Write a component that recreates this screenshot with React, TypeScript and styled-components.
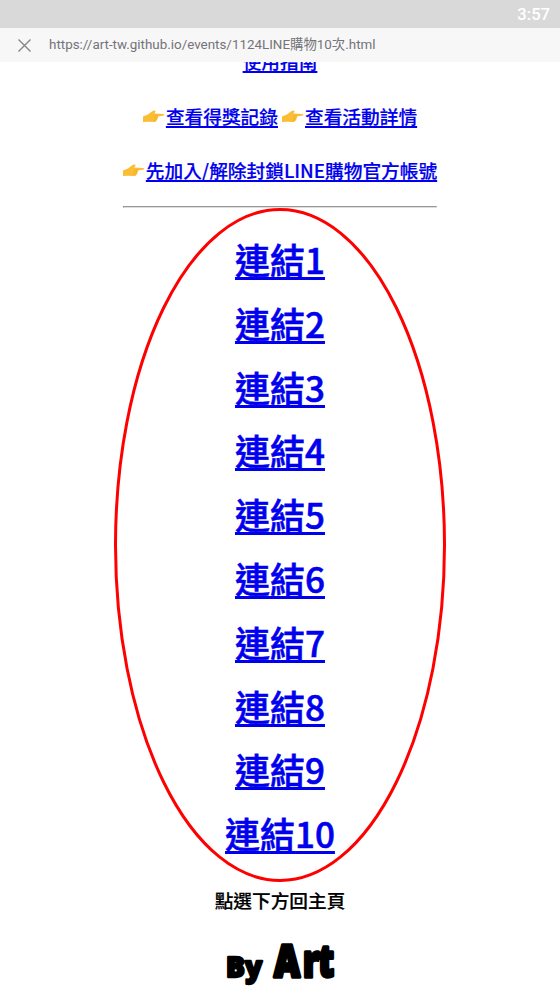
import React from "react";
import styled, { createGlobalStyle } from "styled-components";

const GlobalStyle = createGlobalStyle`
  html, body { margin: 0; background: #fff; overflow: hidden; }
  * { box-sizing: border-box; }
`;

const Screen = styled.div`
  position: relative;
  display: flex;
  flex-direction: column;
  width: 560px;
  height: 996px;
  overflow: hidden;
  background: #fff;
  font-family: "Noto Sans CJK TC", sans-serif;
`;

const StatusBar = styled.header`
  flex: none;
  height: 28px;
  padding-right: 10px;
  background: #d9d9d9;
  color: #fff;
  font: 500 16.6px/29px Roboto, sans-serif;
  text-align: right;
`;

const AddressBar = styled.div`
  flex: none;
  display: flex;
  align-items: center;
  height: 34px;
  padding-left: 18px;
  gap: 18px;
  background: #f7f7f7;
  color: #737478;
`;

const CloseIcon = styled.svg`
  width: 13px;
  height: 13px;
  stroke: #858585;
  stroke-width: 1.4;
`;

const Address = styled.span`
  font: 400 13.4px/34px Roboto, "Noto Sans CJK TC", sans-serif;
  white-space: nowrap;
`;

const Page = styled.main`
  flex: 1;
  min-height: 0;
  display: flex;
  flex-direction: column;
  align-items: center;
  overflow: hidden;
`;

const Row = styled.div<{ $h: number }>`
  flex: none;
  display: flex;
  align-items: center;
  justify-content: center;
  height: ${(p) => p.$h}px;
  white-space: nowrap;
`;

const GuideRow = styled(Row)`
  margin-top: -15px;
`;

const Link = styled.a`
  color: #0000ee;
  font-size: 18.7px;
  font-weight: 500;
  line-height: 28px;
  -webkit-text-stroke: 0.2px #0000ee;
  text-decoration: underline;
  text-decoration-thickness: 1.5px;
  text-decoration-skip-ink: none;
  text-underline-offset: 2px;
`;

const Hand = styled.svg`
  width: 22px;
  height: 14px;
  margin-right: 1px;
  margin-left: 4px;
  &:first-child { margin-left: 0; }
`;

const Divider = styled.hr`
  flex: none;
  width: 314px;
  height: 2px;
  margin: 22px 0 0;
  border: 1px solid;
  border-color: #969696 #dedede #dedede #969696;
`;

const LinkList = styled.nav`
  flex: none;
  display: grid;
  grid-auto-rows: 63.8px;
  justify-items: center;
  margin-top: 19px;
`;

const BigLink = styled(Link)`
  font-size: 35px;
  line-height: 64px;
  -webkit-text-stroke-width: 0.6px;
  text-decoration-thickness: 3px;
  text-underline-offset: 2.5px;
`;

const Caption = styled.p`
  margin: 21px 0 0;
  color: #000;
  font-size: 18.67px;
  font-weight: 500;
  line-height: 28px;
  -webkit-text-stroke: 0.2px #000;
`;

const Logo = styled.svg`
  flex: none;
  width: 130px;
  height: 60px;
  margin-top: 21px;
  fill: #000;
  stroke: #000;
  stroke-linejoin: round;
  font-family: "Noto Sans", sans-serif;
  font-weight: 900;
`;

const Ring = styled.svg`
  position: absolute;
  left: 113px;
  top: 206px;
  width: 334px;
  height: 678px;
  fill: none;
  stroke: #f00;
  stroke-width: 3;
  pointer-events: none;
`;

const PointingHand = () => (
  <Hand viewBox="0 0 22 14">
    <path
      d="M0 7.4 5 5.5 8.2 3Q10 1.6 12 1.6L12.6 2.8 11.2 4.6 20.4 4.9Q22 5.4 21 6.6L14.9 7.4Q15.5 8 14.5 9.2Q14.8 10.5 13.5 11.2Q13.2 12.9 11.8 13L5 12.7 0 13Z"
      fill="#fbbd34"
    />
    <path d="M11 6.9 15 7.1M11 9.1 14.5 9.2M10.8 11.1 13.5 11.2" fill="none" stroke="#efa82d" strokeWidth=".6" />
  </Hand>
);

export default function App() {
  return (
    <Screen>
      <GlobalStyle />
      <StatusBar>3:57</StatusBar>
      <AddressBar>
        <CloseIcon viewBox="0 0 13 13">
          <path d="M.5.5 12.5 12.5M12.5.5.5 12.5" />
        </CloseIcon>
        <Address>https://art-tw.github.io/events/1124LINE購物10次.html</Address>
      </AddressBar>
      <Page>
        <GuideRow $h={28}>
          <Link>使用指南</Link>
        </GuideRow>
        <Row $h={81}>
          <PointingHand />
          <Link>查看得獎記錄</Link>
          <PointingHand />
          <Link>查看活動詳情</Link>
        </Row>
        <Row $h={28}>
          <PointingHand />
          <Link>先加入/解除封鎖LINE購物官方帳號</Link>
        </Row>
        <Divider />
        <LinkList>
          {Array.from({ length: 10 }, (_, i) => (
            <BigLink key={i}>連結{i + 1}</BigLink>
          ))}
        </LinkList>
        <Caption>點選下方回主頁</Caption>
        <Logo viewBox="0 0 130 60">
          <text x="11" y="42" fontSize="29" strokeWidth="2.4" textLength="36" lengthAdjust="spacingAndGlyphs">By</text>
          <text y="42" fontSize="44" strokeWidth="3.5">
            <tspan x="59" textLength="26" lengthAdjust="spacingAndGlyphs">A</tspan>
            <tspan x="88" textLength="16" lengthAdjust="spacingAndGlyphs">r</tspan>
            <tspan x="103" textLength="16" lengthAdjust="spacingAndGlyphs">t</tspan>
          </text>
        </Logo>
      </Page>
      <Ring viewBox="0 0 334 678">
        <ellipse cx="167" cy="339" rx="164.5" ry="335.5" />
      </Ring>
    </Screen>
  );
}
